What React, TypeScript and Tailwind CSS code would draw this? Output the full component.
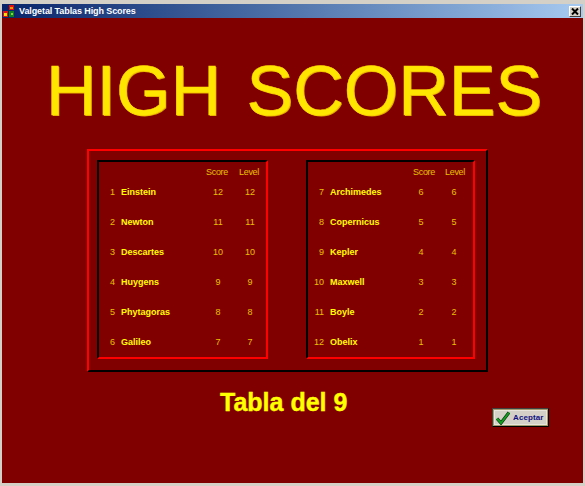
const leftRows = [
  { rank: 1, name: 'Einstein', score: 12, level: 12 },
  { rank: 2, name: 'Newton', score: 11, level: 11 },
  { rank: 3, name: 'Descartes', score: 10, level: 10 },
  { rank: 4, name: 'Huygens', score: 9, level: 9 },
  { rank: 5, name: 'Phytagoras', score: 8, level: 8 },
  { rank: 6, name: 'Galileo', score: 7, level: 7 }
];

const rightRows = [
  { rank: 7, name: 'Archimedes', score: 6, level: 6 },
  { rank: 8, name: 'Copernicus', score: 5, level: 5 },
  { rank: 9, name: 'Kepler', score: 4, level: 4 },
  { rank: 10, name: 'Maxwell', score: 3, level: 3 },
  { rank: 11, name: 'Boyle', score: 2, level: 2 },
  { rank: 12, name: 'Obelix', score: 1, level: 1 }
];

type Row = (typeof leftRows)[number];

type ScoreTableProps = {
  rows: Row[];
  className: string;
  headSpacer: string;
  headLevel: string;
  nameClass: string;
  levelClass: string;
};

function ScoreTable({ rows, className, headSpacer, headLevel, nameClass, levelClass }: ScoreTableProps) {
  return (
    <div className={`flex h-[199px] flex-col border-2 border-t-black border-l-black border-r-[#ff0000] border-b-[#ff0000] ${className}`}>
      <div className="box-border flex h-[15px] shrink-0 items-center pt-[6px] pb-[1px] text-[9px] leading-[12px] tracking-[-0.3px] text-[#e8c000]">
        <span className={headSpacer} />
        <span className="w-[28px] text-center">Score</span>
        <span className={`w-[28px] text-center ${headLevel}`}>Level</span>
      </div>
      <div className="flex shrink-0 flex-col">
        {rows.map((row) => (
          <div key={row.rank} className="flex h-[30px] shrink-0 items-center text-[9px] leading-[12px]">
            <span className="w-[16px] text-right text-[#e8c000]">{row.rank}</span>
            <span className={`ml-[6px] font-bold text-[#ffff00] ${nameClass}`}>{row.name}</span>
            <span className="w-[28px] text-center text-[#e8c000]">{row.score}</span>
            <span className={`w-[28px] text-center text-[#e8c000] ${levelClass}`}>{row.level}</span>
          </div>
        ))}
      </div>
    </div>
  );
}

export default function App() {
  return (
    <div className="flex h-[486px] w-[585px] flex-col overflow-hidden border-x-2 border-t-4 border-b-[3px] border-[#d4d0c8] bg-[#800000] font-['Liberation_Sans',sans-serif]">
      <div className="flex h-[14px] shrink-0 items-center bg-gradient-to-r from-[#0a246a] to-[#a6caf0] pl-[1px] pr-[2px]">
        <svg width="13" height="13" viewBox="0 0 13 13" className="shrink-0">
          <rect x="6" y="0" width="5" height="5" fill="#e01010" />
          <rect x="7" y="2" width="3" height="2" fill="#e0a000" />
          <rect x="0" y="6" width="5" height="6" fill="#e01010" />
          <rect x="1" y="8" width="3" height="3" fill="#ffe000" />
          <rect x="6" y="6" width="5" height="6" fill="#108020" />
          <rect x="8" y="8" width="2" height="2" fill="#90d040" />
        </svg>
        <span className="ml-[3px] text-[9px] leading-[14px] font-bold tracking-[-0.1px] text-white">Valgetal Tablas High Scores</span>
        <div className="ml-auto flex h-[11px] w-[12px] items-center justify-center border border-t-white border-l-white border-r-[#404040] border-b-[#404040] bg-[#d4d0c8]">
          <svg width="8" height="7" viewBox="0 0 8 7">
            <path d="M1 0.5 L7 6.5 M7 0.5 L1 6.5" stroke="#000" strokeWidth="2" />
          </svg>
        </div>
      </div>

      <div className="flex flex-1 flex-col">
        <h1 className="mt-[32px] ml-[44px] text-[70px] leading-[83px] whitespace-nowrap text-[#ffe600] [word-spacing:6px] [-webkit-text-stroke:0.5px_#ffd800] [text-shadow:1px_1px_0_#e0a800]">
          HIGH SCORES
        </h1>

        <div className="mt-[16px] ml-[85px] flex h-[223px] w-[401px] shrink-0 items-start border-2 border-t-[#ff0000] border-l-[#ff0000] border-r-black border-b-black pt-[9px] pl-[8px]">
          <ScoreTable
            rows={leftRows}
            className="w-[171px]"
            headSpacer="w-[104px]"
            headLevel="ml-[4px]"
            nameClass="w-[83px]"
            levelClass="ml-[4px]"
          />
          <ScoreTable
            rows={rightRows}
            className="ml-[38px] w-[169px]"
            headSpacer="w-[102px]"
            headLevel="ml-[3px]"
            nameClass="w-[77px]"
            levelClass="ml-[5px]"
          />
        </div>

        <div className="mt-[15px] flex items-start">
          <p className="ml-[218px] text-[25px] leading-[30px] font-bold whitespace-nowrap text-[#ffff00] [-webkit-text-stroke:0.4px_#ffff00]">Tabla del 9</p>
          <button className="mt-[21px] mr-[34px] ml-auto flex h-[19px] w-[57px] items-center border border-t-[#404040] border-l-[#404040] border-r-black border-b-black bg-[#d4d0c8] pl-[3px] shadow-[inset_0_0_0_1px_#a09c70,inset_0_0_0_2px_#e8e6dc]">
            <svg width="14" height="14" viewBox="0 0 14 14" className="shrink-0">
              <path d="M1 7.5 L5 12 L13 1.5" fill="none" stroke="#103010" strokeWidth="3.2" />
              <path d="M1 7.5 L5 12 L13 1.5" fill="none" stroke="#10a020" strokeWidth="2" />
            </svg>
            <span className="ml-[3px] text-[8px] leading-[10px] font-bold tracking-[0.1px] text-[#101080]">Aceptar</span>
          </button>
        </div>
      </div>
    </div>
  );
}
